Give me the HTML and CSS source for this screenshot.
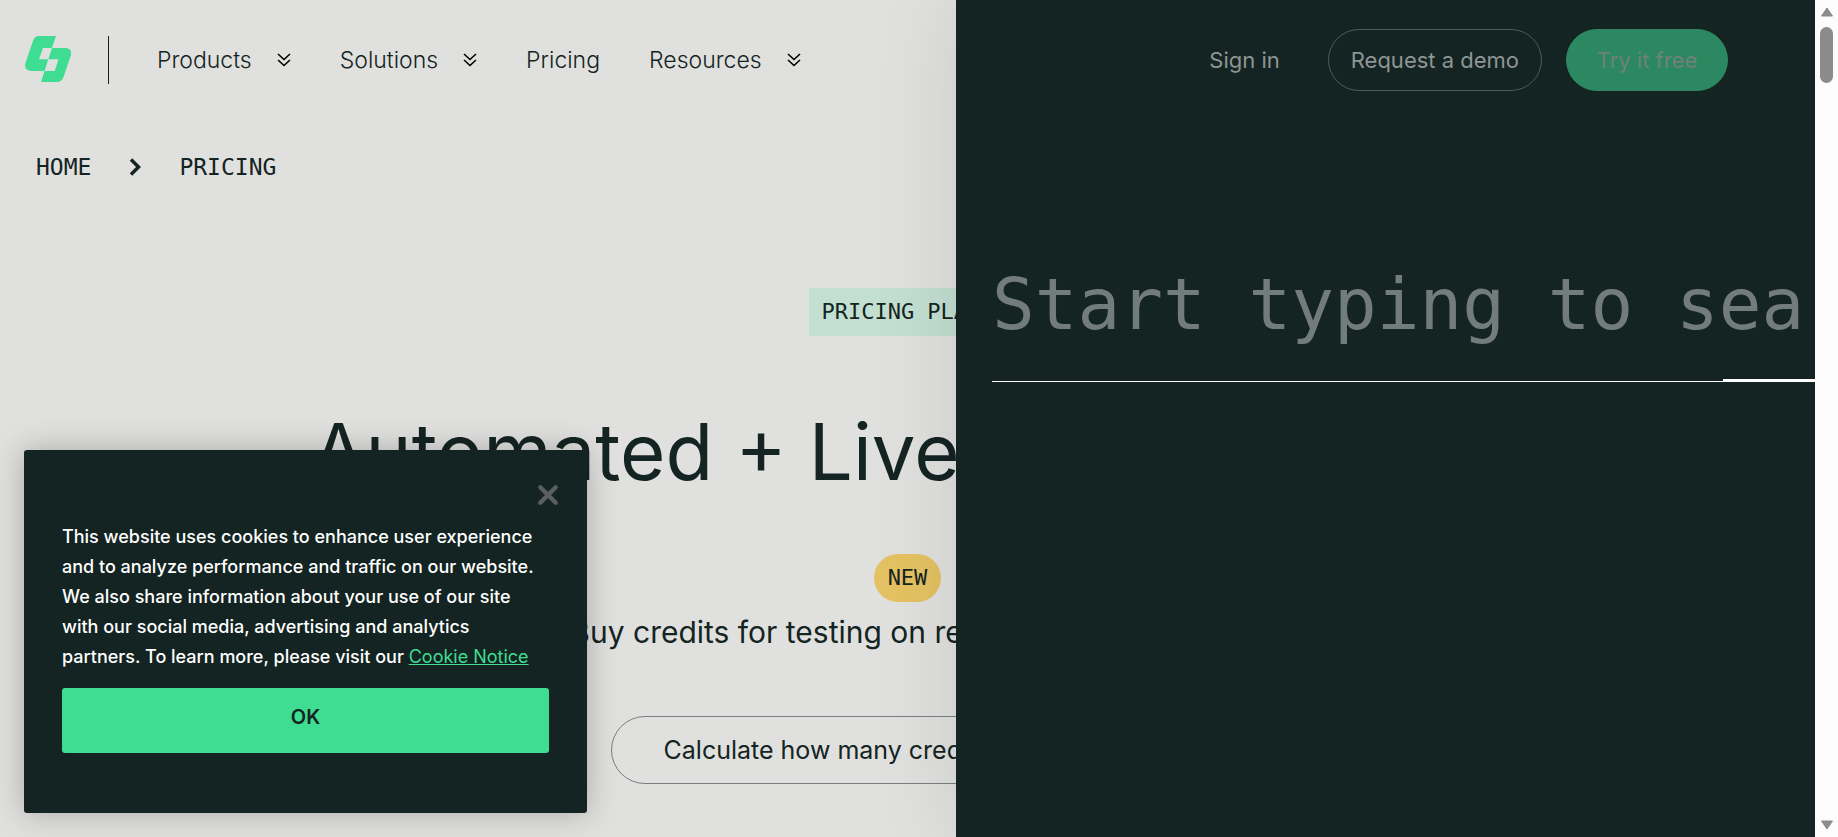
FILE: index.html
```html
<!DOCTYPE html>
<html lang="en">
<head>
<meta charset="utf-8">
<title>Pricing</title>
<link rel="stylesheet" href="styles.css">
</head>
<body>
<svg class="sprite" aria-hidden="true">
  <symbol id="chevrons" viewBox="0 0 14 14"><path d="M1 1l6 5.500 6-5.500M1 7l6 5.500 6-5.500" fill="none" stroke="currentColor" stroke-width="1.600"/></symbol>
</svg>
<div class="page">
  <header class="header">
    <a class="logo" href="#" aria-label="Home page">
      <svg viewBox="0 0 46 46"><path d="M14 0H31L27 12H18L14 23.300H23.300L19.600 35H6Q-1.500 34 .4 27L8 5Q9.500 0 14 0Z"/><path d="M27 12H41Q47.500 13 46 19L38.500 41Q36.500 46 32 46H16L19.600 35H29.700L33.500 23.300H23.300Z"/></svg>
    </a>
    <nav class="nav">
      <button class="nav-item">Products <svg><use href="#chevrons"/></svg></button>
      <button class="nav-item">Solutions <svg><use href="#chevrons"/></svg></button>
      <a class="nav-item" href="#">Pricing</a>
      <button class="nav-item">Resources <svg><use href="#chevrons"/></svg></button>
    </nav>
    <div class="actions">
      <a class="sign-in" href="#">Sign in</a>
      <a class="pill pill-outline" href="#">Request a demo</a>
      <a class="pill pill-green" href="#">Try it free</a>
    </div>
  </header>

  <nav class="crumbs" aria-label="Breadcrumb">
    <a href="#">HOME</a>
    <svg viewBox="0 0 12 18"><path d="M2 1.500l7.500 7.500L2 16.500" fill="none" stroke="currentColor" stroke-width="3.500"/></svg>
    <a href="#">PRICING</a>
  </nav>

  <main class="hero">
    <span class="tag">PRICING PLANS</span>
    <h1>Automated + Live Testing Prices</h1>
    <span class="badge">NEW</span>
    <p>Buy credits for testing on real devices and apps</p>
    <a class="calculate" href="#">Calculate how many credits you will need</a>
  </main>

  <aside class="drawer">
    <div class="search">
      <input type="text" aria-label="Search" placeholder="Start typing to search">
    </div>
  </aside>

  <section class="cookies" aria-label="Cookies">
    <button class="close" aria-label="Close"><svg viewBox="0 0 20 20"><path d="M3 3l14 14M17 3L3 17" fill="none" stroke="currentColor" stroke-width="4" stroke-linecap="round"/></svg></button>
    <p>This website uses cookies to enhance user experience and to analyze performance and traffic on our website. We also share information about your use of our site with our social media, advertising and analytics partners. To learn more, please visit our <a href="#">Cookie Notice</a></p>
    <button class="ok">OK</button>
  </section>
</div>
<div class="scrollbar" aria-hidden="true">
  <svg viewBox="0 0 14 10"><path d="M7 1L12.500 9H1.500Z"/></svg>
  <div class="thumb"></div>
  <svg class="down" viewBox="0 0 14 10"><path d="M7 9L12.500 1H1.500Z"/></svg>
</div>
</body>
</html>
```

FILE: styles.css
```css
* { box-sizing: border-box; }

body {
  margin: 0;
  display: flex;
  height: 100vh;
  overflow: hidden;
  background: #e0e0de;
  color: #142422;
  font-family: Inter, "Liberation Sans", sans-serif;
}

button {
  border: 0;
  padding: 0;
  background: none;
  color: inherit;
  font: inherit;
}

a { color: inherit; text-decoration: none; }

.sprite { position: absolute; width: 0; height: 0; }

.page {
  position: relative;
  flex: 1;
  min-width: 0;
  overflow: hidden;
}

.header {
  position: relative;
  z-index: 2;
  display: flex;
  align-items: center;
  height: 120px;
  padding: 0 87px 0 25px;
}

.logo {
  display: flex;
  align-items: flex-start;
  height: 48px;
  padding-right: 37px;
  border-right: 1px solid #142422;
}
.logo svg { width: 46px; height: 46px; fill: #3fdd92; }

.nav {
  display: flex;
  gap: 49px;
  margin-left: 48px;
  font-size: 23px;
  font-weight: 300;
  line-height: 28px;
}
.nav-item { display: flex; align-items: center; gap: 25px; white-space: nowrap; }
.nav-item svg { width: 14px; height: 14px; color: #000; }

.actions {
  display: flex;
  align-items: center;
  gap: 24px;
  margin-left: auto;
  color: #8e9594;
  font-size: 22px;
  white-space: nowrap;
}
.sign-in { margin-right: 24px; }
.pill {
  min-width: 162px;
  padding: 0 22px;
  border: 1px solid #4e5b59;
  border-radius: 31px;
  line-height: 60px;
  text-align: center;
}
.pill-green { background: #2b8860; border-color: #2b8860; color: #6f817a; }

.crumbs {
  display: flex;
  align-items: center;
  gap: 38px;
  padding: 32px 36px 0;
  font: 23px/30px "DejaVu Sans Mono", monospace;
}
.crumbs svg { width: 12px; height: 18px; }

.hero {
  display: flex;
  flex-direction: column;
  align-items: center;
  padding-top: 106px;
  white-space: nowrap;
}
.tag, .badge {
  padding: 0 12px;
  font: 22px/48px "DejaVu Sans Mono", monospace;
}
.tag { background: #c3dfd1; }
.badge { padding: 0 14px; border-radius: 24px; background: #e4c162; }
.hero h1 {
  margin: 66px 0 52px;
  font-size: 78px;
  font-weight: 400;
  line-height: 100px;
}
.hero p { margin: 8px 0 62px; font-size: 30px; line-height: 44px; }
.calculate {
  padding: 0 52px;
  border: 1px solid #76807e;
  border-radius: 34px;
  font-size: 25px;
  line-height: 66px;
}

.drawer {
  position: absolute;
  z-index: 1;
  top: 0;
  right: 0;
  bottom: 0;
  left: 956px;
  padding: 240px 0 0 36px;
  background: #142422;
  box-shadow: 0 0 80px rgba(0, 0, 0, .1);
}
.search { position: relative; border-bottom: 1px solid #fff; }
.search::after {
  content: "";
  position: absolute;
  right: 0;
  bottom: -1px;
  width: 92px;
  height: 3px;
  background: #fff;
}
.search input {
  display: block;
  width: 100%;
  height: 141px;
  padding: 0 0 12px;
  border: 0;
  outline: 0;
  background: none;
  color: #fff;
  font: 71px/100px "DejaVu Sans Mono", monospace;
}
.search input::placeholder { color: #727c7b; opacity: 1; }

.cookies {
  position: absolute;
  z-index: 3;
  left: 24px;
  bottom: 24px;
  width: 563px;
  padding: 34px 38px 60px;
  border-radius: 3px;
  background: #142422;
  box-shadow: 0 0 30px rgba(0, 0, 0, .25);
  color: #fff;
}
.close { display: block; margin: 0 -10px 0 auto; color: #5b5f5e; }
.close svg { display: block; width: 22px; height: 22px; }
.cookies p { margin: 16px 0; font-size: 18px; font-weight: 500; line-height: 30px; }
.cookies a { color: #3fdd92; text-decoration: underline; font-weight: 400; }
.ok {
  display: block;
  width: 100%;
  padding-bottom: 6px;
  border-radius: 3px;
  background: #3fdd92;
  color: #142422;
  font-size: 20px;
  font-weight: 600;
  line-height: 59px;
}

.scrollbar {
  display: flex;
  flex-direction: column;
  align-items: center;
  gap: 10px;
  width: 23px;
  padding: 7px 0;
  background: #fcfcfc;
}
.scrollbar svg { width: 14px; height: 10px; fill: #8b8b8b; stroke: #8b8b8b; stroke-linejoin: round; }
.scrollbar .down { margin-top: auto; }
.thumb { width: 13px; height: 56px; border-radius: 7px; background: #8b8b8b; }
```
